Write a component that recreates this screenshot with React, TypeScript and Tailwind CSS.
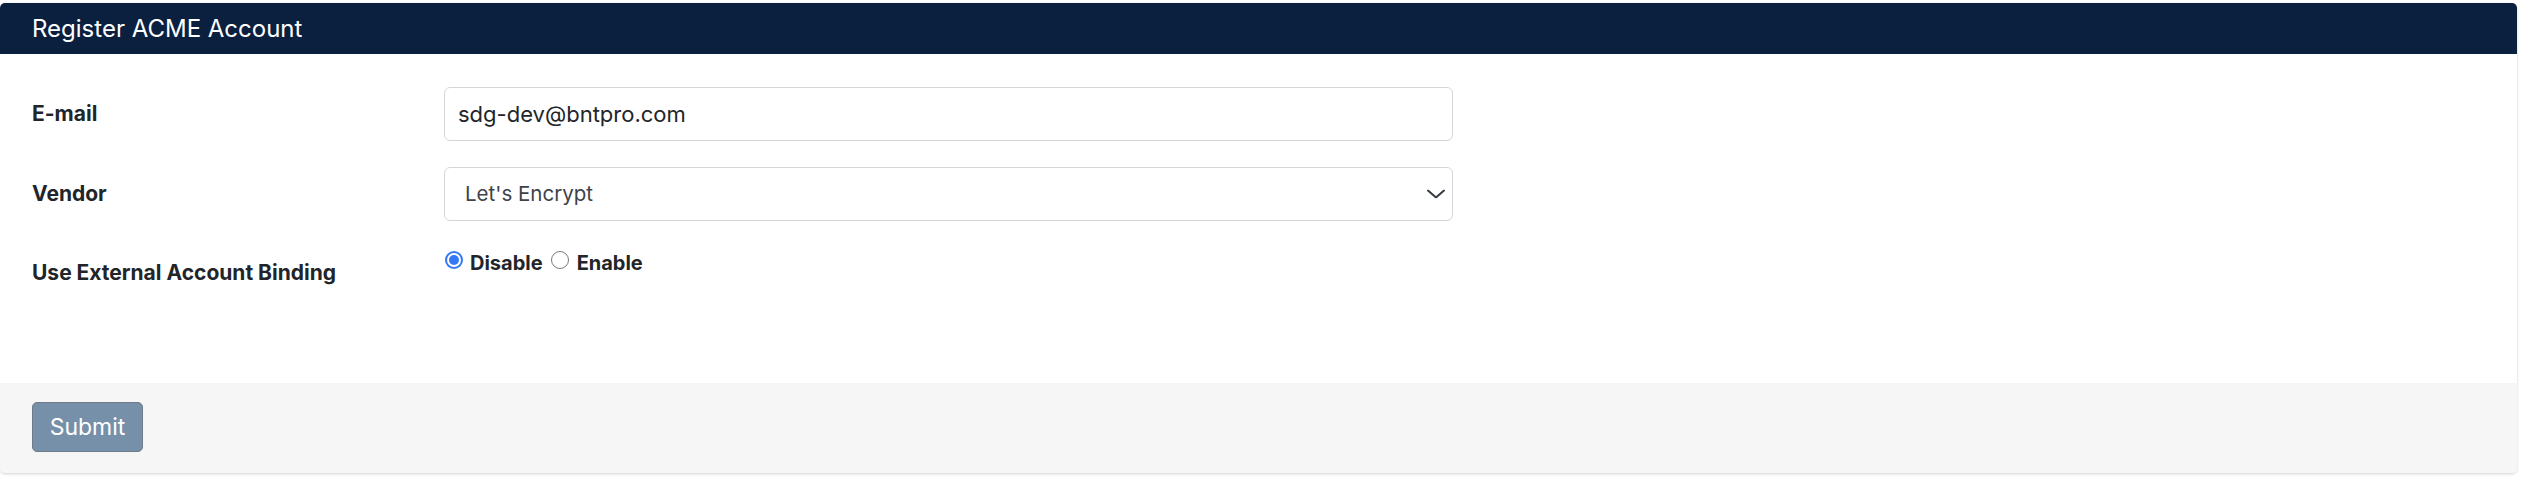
export default function App() {
  const font = { fontFamily: 'Inter, "Liberation Sans", sans-serif' }

  return (
    <div className="w-[2526px] h-[484px] bg-white pt-[3px]" style={font}>
      <div className="w-[2517px] rounded-[5px] overflow-hidden shadow-[0_1px_3px_rgba(0,0,0,0.18)] bg-white">
        {/* header */}
        <div className="h-[51px] bg-[#0b1f3f] px-[32px] flex items-center">
          <h1 className="text-[24px] leading-none text-white">Register ACME Account</h1>
        </div>

        {/* body */}
        <div className="h-[329px] px-[32px] pt-[33px] flex flex-col gap-[26px] text-[#212529]">
          <div className="flex">
            <label className="w-[412px] pt-[11px] text-[21px] leading-[31px] font-bold">E-mail</label>
            <input
              type="email"
              defaultValue="sdg-dev@bntpro.com"
              className="w-[1009px] h-[54px] border border-[#d3d6da] rounded-[6px] px-[13px] text-[22px] text-[#212529] outline-none"
            />
          </div>

          <div className="flex">
            <label className="w-[412px] pt-[11px] text-[21px] leading-[31px] font-bold">Vendor</label>
            <div className="relative w-[1009px] h-[54px] border border-[#d3d6da] rounded-[6px] pl-[20px] flex items-center text-[20.5px] text-[#3d4349]">
              <span>Let's Encrypt</span>
              <svg
                className="absolute right-[7px] top-1/2 -translate-y-1/2"
                width="18"
                height="9"
                viewBox="0 0 18 9"
                fill="none"
              >
                <path d="M1 1l8 7 8-7" stroke="#343a40" strokeWidth="2" strokeLinecap="round" strokeLinejoin="round" />
              </svg>
            </div>
          </div>

          <div className="flex">
            <label className="w-[412px] pt-[10px] text-[21px] leading-[31px] font-bold">Use External Account Binding</label>
            <div className="flex items-center h-[31px] text-[20px] font-bold">
              <span className="w-[18px] h-[18px] rounded-full bg-[#3478f6] flex items-center justify-center mt-[-6px] ml-[1px]">
                <span className="w-[14px] h-[14px] rounded-full bg-white flex items-center justify-center">
                  <span className="w-[10px] h-[10px] rounded-full bg-[#3478f6]" />
                </span>
              </span>
              <span className="ml-[7px]">Disable</span>
              <span className="w-[18px] h-[18px] rounded-full border border-[#7a7a7a] bg-white mt-[-6px] ml-[8px]" />
              <span className="ml-[8px]">Enable</span>
            </div>
          </div>
        </div>

        {/* footer */}
        <div className="h-[90px] bg-[#f6f6f6] px-[32px] pt-[19px]">
          <button className="w-[111px] h-[50px] bg-[#7790a9] border border-[#6f7b88] rounded-[5px] text-[23px] text-white">
            Submit
          </button>
        </div>
      </div>
    </div>
  )
}
